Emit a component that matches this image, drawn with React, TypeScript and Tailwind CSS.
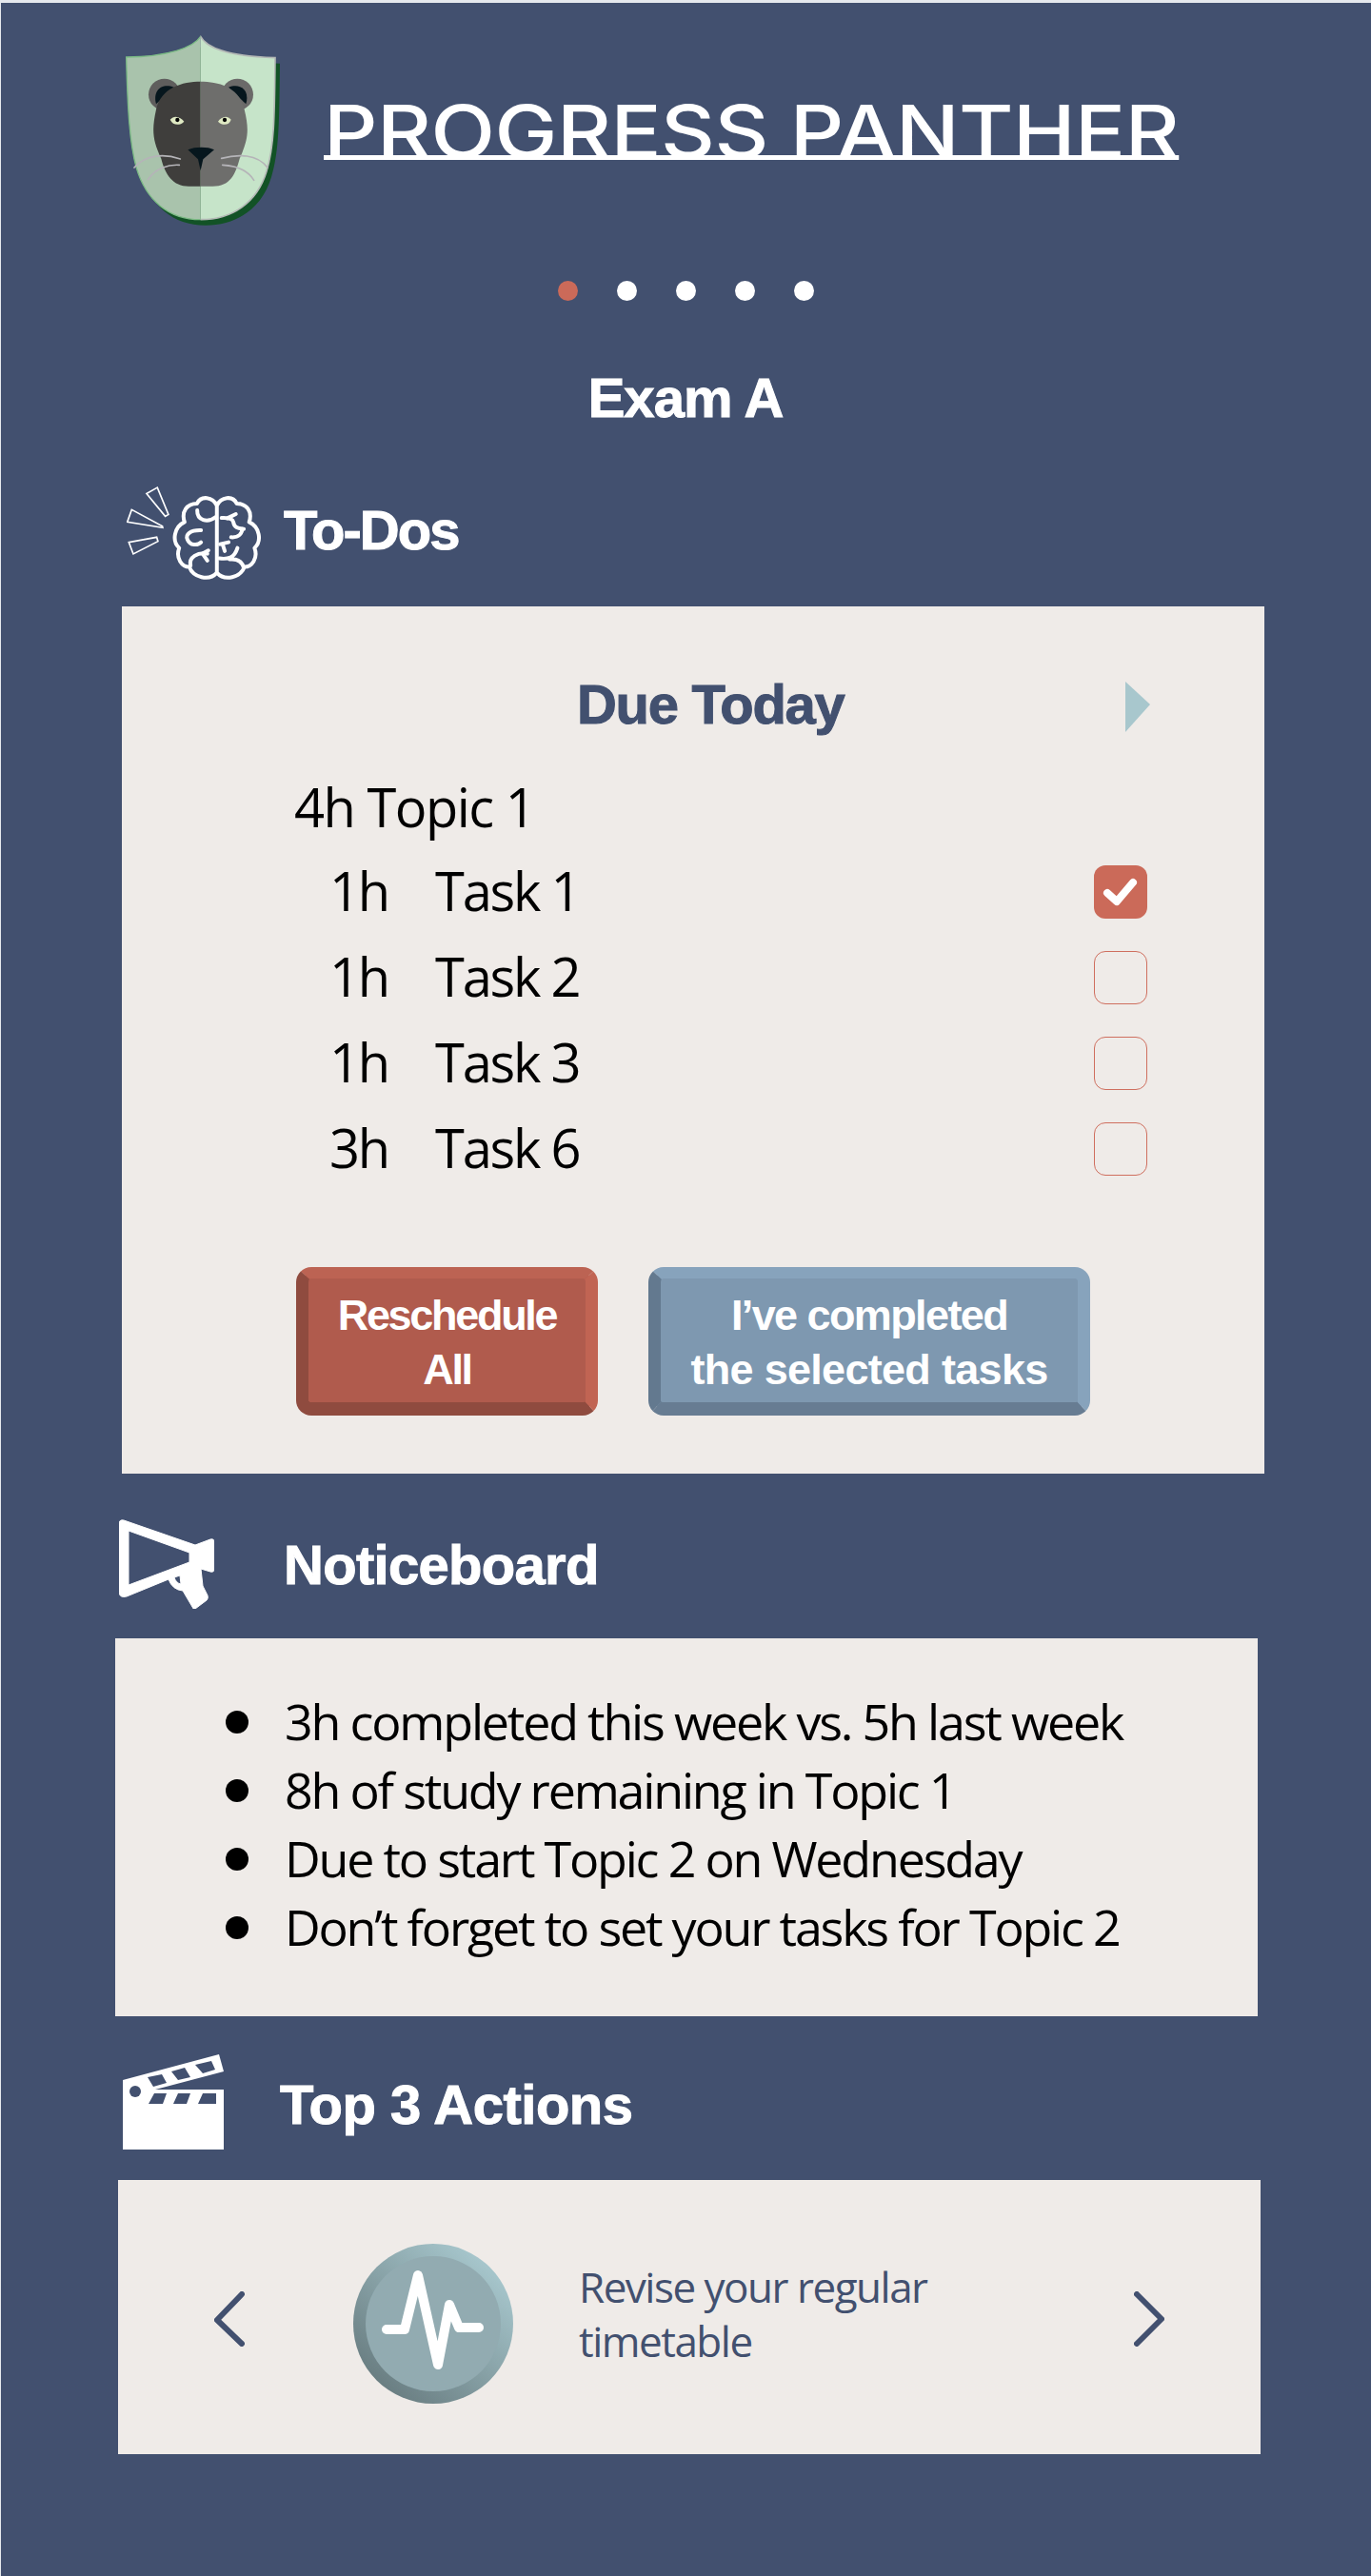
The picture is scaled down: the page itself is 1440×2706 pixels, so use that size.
import React from "react";

const sans = "font-['Liberation_Sans',Arial,sans-serif]";
const body = "font-['Open_Sans','Noto_Sans',sans-serif]";

function Logo() {
  const shield = "M302 55 C320 90 390 118 537 122 C535 300 535 400 510 480 C480 580 400 632 302 632 C200 632 130 570 100 470 C78 390 72 280 68 120 C200 118 280 90 302 55 Z";
  const face = "M302 197 C360 197 425 215 440 285 C456 350 452 380 425 440 C412 490 395 527 340 527 L265 527 C215 527 190 490 178 440 C150 380 148 350 162 285 C178 215 245 197 302 197 Z";
  return (
    <svg viewBox="0 0 600 690" className="w-[200px] h-[230px] shrink-0">
      <defs>
        <clipPath id="shl"><rect x="0" y="0" width="302" height="690" /></clipPath>
        <clipPath id="shr"><rect x="302" y="0" width="298" height="690" /></clipPath>
      </defs>
      <path d={shield} fill="#125226" transform="translate(15 18)" />
      <path d={shield} fill="#a9c3ac" clipPath="url(#shl)" />
      <path d={shield} fill="#c6e4c9" clipPath="url(#shr)" />
      <path d={shield} fill="none" stroke="#7cbb85" strokeWidth="4" clipPath="url(#shl)" />
      <path d={shield} fill="none" stroke="#b4b9b6" strokeWidth="5" clipPath="url(#shr)" />
      <circle cx="188" cy="238" r="50" fill="#5f5e5d" />
      <circle cx="418" cy="238" r="50" fill="#6b6a69" />
      <path d="M162 268 C150 225 180 200 218 215 Z" fill="#06161d" />
      <path d="M445 268 C458 225 428 200 390 215 Z" fill="#06161d" />
      <path d={face} fill="#3f3e3c" clipPath="url(#shl)" />
      <path d={face} fill="#6e6e6c" clipPath="url(#shr)" />
      <path d="M206 317 C220 300 240 310 250 323 C235 338 215 335 206 317 Z" fill="#dfe9c3" />
      <path d="M398 317 C385 300 365 310 357 323 C372 338 392 335 398 317 Z" fill="#dfe9c3" />
      <circle cx="229" cy="318" r="6.5" fill="#050505" />
      <circle cx="378" cy="318" r="6.5" fill="#050505" />
      <path d="M262 412 C285 402 325 402 345 412 L310 442 L302 478 L294 442 Z" fill="#06161d" />
      <g fill="none" stroke="#b5b4b8" strokeWidth="5" strokeLinecap="round">
        <path d="M238 441 C190 425 130 425 93 468" />
        <path d="M235 460 C200 458 160 470 136 506" />
        <path d="M368 439 C420 425 480 425 513 468" />
        <path d="M371 460 C410 462 450 475 470 508" />
      </g>
    </svg>
  );
}

function BrainIcon() {
  return (
    <svg viewBox="100 415 430 300" className="w-[143px] h-[100px] shrink-0">
      <g fill="none" stroke="#fff" strokeWidth="5">
        <path d="M197 421 L163 440 L222 512 L232 506 Z" />
        <path d="M116 491 L102 530 L214 548 L213 543 Z" />
        <path d="M107 594 L121 631 L199 591 L195 578 Z" />
      </g>
      <g fill="none" stroke="#fff" strokeWidth="12" strokeLinecap="round" strokeLinejoin="round">
        <path d="M385 690 V478 C372 450 335 445 322 472 C290 472 272 498 283 530 C250 545 242 590 266 612 C254 645 275 672 298 672 C310 705 360 718 385 690 C410 718 460 705 472 672 C495 672 516 645 504 612 C528 590 520 545 487 530 C498 498 480 472 448 472 C435 445 398 450 385 478" />
        <path d="M323 493 C322 525 355 535 383 513" />
        <path d="M400 517 C420 516 435 518 437 530 C440 550 455 550 470 552" />
        <path d="M418 518 L445 505" />
        <path d="M335 556 C300 555 285 570 292 585 C300 605 325 605 335 594" />
        <path d="M430 578 C455 580 465 565 465 552" />
        <path d="M302 668 C295 640 325 625 355 630" />
        <path d="M340 630 L358 620 M340 630 L355 652" />
        <path d="M395 600 L422 594 M403 600 L410 622" />
        <path d="M393 645 C420 648 440 645 450 612 M425 648 C450 645 465 655 470 675" />
      </g>
    </svg>
  );
}

function MegaphoneIcon() {
  return (
    <svg viewBox="0 0 100 94" className="w-[100px] h-[94px] shrink-0">
      <path
        fill="#fff"
        fillRule="evenodd"
        stroke="#fff"
        strokeWidth="1"
        strokeLinejoin="round"
        d="M0 5 Q0 0 5 1 L80 27 L96 21 Q100 20 100 24 L100 52 Q100 56 96 55 L86 52 L88 70 L93 80 Q94 83 92 85 L80 94 Q78 95 77 92 L67 75 Q56 74 52 63 L8 81 Q0 83 0 76 Z M10 12 L74 35 L74 45 L10 69 Z M58 61 L64 59 L65 68 Q60 67 58 61 Z"
      />
    </svg>
  );
}

function ClapperIcon() {
  return (
    <svg viewBox="0 0 106 100" className="w-[106px] h-[100px] shrink-0">
      <path
        fill="#fff"
        fillRule="evenodd"
        d="M0 27 L101 0 L106 18 L34 37 L106 37 L106 100 L0 100 Z M26 24 L41 21 L46 30 L32 34 Z M51 18 L65 14 L71 24 L58 27 Z M76 11 L93 7 L97 16 L84 20 Z M33 41 L46 41 L42 52 L27 52 Z M58 41 L71 41 L67 52 L53 52 Z M84 41 L98 41 L98 52 L79 52 Z"
      />
      <circle cx="13" cy="39" r="6" fill="#42506f" />
    </svg>
  );
}

function Coin() {
  return (
    <svg viewBox="0 0 168 168" className="w-[168px] h-[168px] shrink-0">
      <defs>
        <linearGradient id="coinEdge" x1="0.85" y1="0.1" x2="0.15" y2="0.9">
          <stop offset="0" stopColor="#a8c8ce" />
          <stop offset="1" stopColor="#687c80" />
        </linearGradient>
      </defs>
      <circle cx="84" cy="84" r="84" fill="url(#coinEdge)" />
      <ellipse cx="84" cy="84" rx="71" ry="71" fill="#92abb1" />
      <path
        d="M35 90 L54 90 L68 33 L89 127 L101 64 L111 88 L132 88"
        fill="none"
        stroke="#fff"
        strokeWidth="10"
        strokeLinecap="round"
        strokeLinejoin="round"
      />
    </svg>
  );
}

function Chevron({ right }: { right?: boolean }) {
  return (
    <svg viewBox="0 0 32 58" className="w-[32px] h-[58px] shrink-0 mt-[3px]">
      <path
        d={right ? "M3 3 L29 29 L3 55" : "M29 3 L3 30 L29 55"}
        fill="none"
        stroke="#42506f"
        strokeWidth="6"
        strokeLinecap="round"
        strokeLinejoin="round"
      />
    </svg>
  );
}

function TaskRow({ h, name, done }: { h: string; name: string; done?: boolean }) {
  return (
    <div className="flex items-center h-[90px]">
      <div className="w-[280px] text-right mb-[5px]">{h}</div>
      <div className="ml-[49px] mb-[5px]">{name}</div>
      {done ? (
        <div className="ml-auto mr-[123px] w-[56px] h-[56px] rounded-[12px] bg-[#cb6a59] flex items-center justify-center">
          <svg viewBox="0 0 56 56" className="w-[56px] h-[56px]">
            <path d="M14 29 L24 38 L41 18" fill="none" stroke="#fff" strokeWidth="8" strokeLinecap="round" strokeLinejoin="round" />
          </svg>
        </div>
      ) : (
        <div className="ml-auto mr-[123px] w-[56px] h-[56px] rounded-[12px] border-[1.5px] border-[#cf6f5f]" />
      )}
    </div>
  );
}

function Notice({ text }: { text: string }) {
  return (
    <li className="flex items-center h-[72px]">
      <span className="w-[24px] h-[24px] rounded-full bg-black shrink-0" />
      <span className="ml-[38px] mb-[3px] whitespace-nowrap">{text}</span>
    </li>
  );
}

export default function App() {
  return (
    <div className="w-[1440px] h-[2706px] bg-[#42506f] border-t-[3px] border-[#e6e9ee] shadow-[inset_1px_0_0_#e6e9ee] overflow-hidden">
      <div className="flex items-start pt-[17px] pl-[110px]">
        <Logo />
        <h1 className="ml-[30px] mt-[68px] origin-left scale-x-[1.145] font-['Inter',sans-serif] font-medium text-[77px] leading-[100px] tracking-[-0.5px] text-white whitespace-nowrap underline decoration-[5px] underline-offset-[-3px] [text-decoration-skip-ink:none]">
          PROGRESS PANTHER
        </h1>
      </div>

      <div className="mt-[45px] flex justify-center gap-[41px]">
        <span className="w-[21px] h-[21px] rounded-full bg-[#cb6a59]" />
        <span className="w-[21px] h-[21px] rounded-full bg-white" />
        <span className="w-[21px] h-[21px] rounded-full bg-white" />
        <span className="w-[21px] h-[21px] rounded-full bg-white" />
        <span className="w-[21px] h-[21px] rounded-full bg-white" />
      </div>

      <div className={`mt-[72px] h-[60px] flex items-center justify-center text-white font-bold text-[58px] tracking-[-1px] [-webkit-text-stroke:1px_#fff] ${sans}`}>
        <span className="mb-[2px]">Exam A</span>
      </div>

      <div className={`mt-[62px] flex items-center h-[100px] pl-[133px] text-white font-bold text-[58px] tracking-[-2px] [-webkit-text-stroke:1px_#fff] ${sans}`}>
        <BrainIcon />
        <span className="ml-[22px] mb-[8px]">To-Dos</span>
      </div>

      <section className={`mt-[27px] ml-[128px] w-[1200px] h-[911px] bg-[#efebe8] pt-[75px] text-[56px] tracking-[-2.2px] text-black ${body}`}>
        <div className="flex items-center justify-between h-[60px] pl-[478px] pr-[120px]">
          <span className={`font-bold text-[#42506f] text-[58px] tracking-[-1.3px] mb-[6px] [-webkit-text-stroke:1px_#42506f] ${sans}`}>Due Today</span>
          <svg viewBox="0 0 26 53" className="w-[26px] h-[53px]">
            <path d="M0 0 L26 24 L0 53 Z" fill="#a8c7cd" />
          </svg>
        </div>
        <div className="mt-[46px] h-[60px] pl-[181px] flex items-center">
          <span className="mb-[3px] tracking-[-1.5px]">4h Topic 1</span>
        </div>
        <div className="mt-[14px]">
          <TaskRow h="1h" name="Task 1" done />
          <TaskRow h="1h" name="Task 2" />
          <TaskRow h="1h" name="Task 3" />
          <TaskRow h="3h" name="Task 6" />
        </div>
        <div className={`mt-[79px] ml-[183px] flex gap-[53px] text-white font-bold text-[45px] leading-[57px] text-center ${sans}`}>
          <button className="w-[317px] h-[156px] pt-[3px] tracking-[-2.3px] rounded-[16px] border-solid border-t-[12px] border-r-[13px] border-b-[14px] border-l-[13px] border-t-[#bc6353] border-r-[#c16453] border-b-[#8f4b3f] border-l-[#8f4b3f] bg-[#b05b4d]">
            Reschedule<br />All
          </button>
          <button className="w-[464px] h-[156px] pt-[3px] tracking-[-0.7px] rounded-[16px] border-solid border-t-[12px] border-r-[13px] border-b-[14px] border-l-[13px] border-t-[#87a3bc] border-r-[#87a3bc] border-b-[#677c92] border-l-[#63798f] bg-[#7e98b0]">
            <span className="tracking-[-1.6px]">I’ve completed</span><br />the selected tasks
          </button>
        </div>
      </section>

      <div className={`mt-[48px] flex items-center h-[94px] pl-[125px] text-white font-bold text-[58px] tracking-[-0.7px] [-webkit-text-stroke:1px_#fff] ${sans}`}>
        <MegaphoneIcon />
        <span className="ml-[73px]">Noticeboard</span>
      </div>

      <section className={`mt-[31px] ml-[121px] w-[1200px] h-[397px] bg-[#efebe8] pt-[52px] pl-[116px] text-[52px] tracking-[-2.2px] text-black ${body}`}>
        <ul>
          <Notice text="3h completed this week vs. 5h last week" />
          <Notice text="8h of study remaining in Topic 1" />
          <Notice text="Due to start Topic 2 on Wednesday" />
          <Notice text="Don’t forget to set your tasks for Topic 2" />
        </ul>
      </section>

      <div className={`mt-[40px] flex items-center h-[100px] pl-[129px] text-white font-bold text-[58px] tracking-[-0.5px] [-webkit-text-stroke:1px_#fff] ${sans}`}>
        <ClapperIcon />
        <span className="ml-[59px] mt-[5px]">Top 3 Actions</span>
      </div>

      <section className={`mt-[32px] ml-[124px] w-[1200px] h-[288px] bg-[#efebe8] flex items-center pl-[101px] ${body}`}>
        <Chevron />
        <div className="ml-[114px] mt-[14px]"><Coin /></div>
        <p className="ml-[69px] mb-[6px] text-[#42506f] text-[44px] leading-[57px] tracking-[-1.5px]">
          Revise your regular<br />timetable
        </p>
        <div className="ml-auto mr-[101px]"><Chevron right /></div>
      </section>
    </div>
  );
}
